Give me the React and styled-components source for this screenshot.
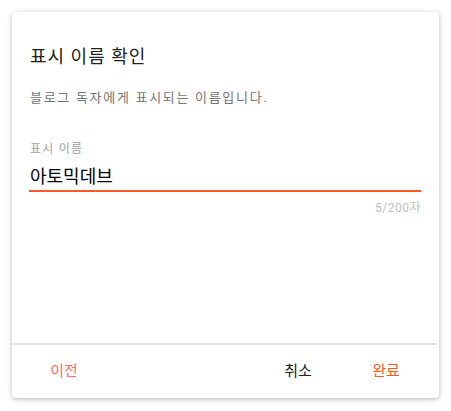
import styled, { createGlobalStyle } from 'styled-components'

const Global = createGlobalStyle`
    body {
        margin: 0;
        padding: 12px;
        background: #ffffff;
        font-family: "Roboto", "Noto Sans CJK KR", sans-serif;
    }
`

export default function App() {
    return (
        <>
            <Global />
            <Card>
                <Content>
                    <Title>표시 이름 확인</Title>
                    <Desc>블로그 독자에게 표시되는 이름입니다.</Desc>
                    <Field>
                        <Label>표시 이름</Label>
                        <Input>아토믹데브</Input>
                        <Counter>5/200자</Counter>
                    </Field>
                </Content>
                <Footer>
                    <Button $color="#ff6b5b">이전</Button>
                    <Spacer />
                    <Button $color="#212121">취소</Button>
                    <Button $color="#ff5722">완료</Button>
                </Footer>
            </Card>
        </>
    )
}

const Card = styled.div`
    width: 427px;
    height: 386px;
    background: #fff;
    border-radius: 4px;
    box-shadow: 0 1px 4px rgba(0, 0, 0, 0.22), 0 2px 8px rgba(0, 0, 0, 0.08);
    display: flex;
    flex-direction: column;
    box-sizing: border-box;
`

const Content = styled.div`
    flex: 1;
    padding: 33px 18px 0 17px;
`

const Title = styled.h2`
    margin: 0;
    font-size: 18px;
    line-height: 24px;
    font-weight: 400;
    letter-spacing: 1px;
    color: #212121;
    padding-left: 1px;
`

const Desc = styled.p`
    margin: 19px 0 0;
    font-size: 13px;
    line-height: 20px;
    letter-spacing: 1.7px;
    color: #757575;
    padding-left: 1px;
`

const Field = styled.div`
    margin-top: 33px;
    display: flex;
    flex-direction: column;
`

const Label = styled.div`
    font-size: 12px;
    line-height: 16px;
    letter-spacing: 1.2px;
    color: #9e9e9e;
    padding-left: 1px;
`

const Input = styled.div`
    margin-top: 8px;
    font-size: 18px;
    line-height: 24px;
    color: #000;
    padding: 0 0 1px 1px;
    border-bottom: 2px solid #ff5722;
`

const Counter = styled.div`
    margin-top: 8px;
    align-self: flex-end;
    font-size: 12px;
    line-height: 16px;
    letter-spacing: 0.5px;
    color: #bdbdbd;
`

const Footer = styled.div`
    height: 55px;
    margin: 0 2px 0 1px;
    border-top: 2px solid #e0e0e0;
    display: flex;
    align-items: center;
    gap: 24px;
    padding: 0 19px 5px 19px;
    box-sizing: border-box;
`

const Spacer = styled.div`
    flex: 1;
`

const Button = styled.button`
    width: 64px;
    height: 36px;
    border: none;
    background: none;
    padding: 0;
    font-family: inherit;
    font-size: 15px;
    color: ${p => p.$color};
    cursor: pointer;
`
